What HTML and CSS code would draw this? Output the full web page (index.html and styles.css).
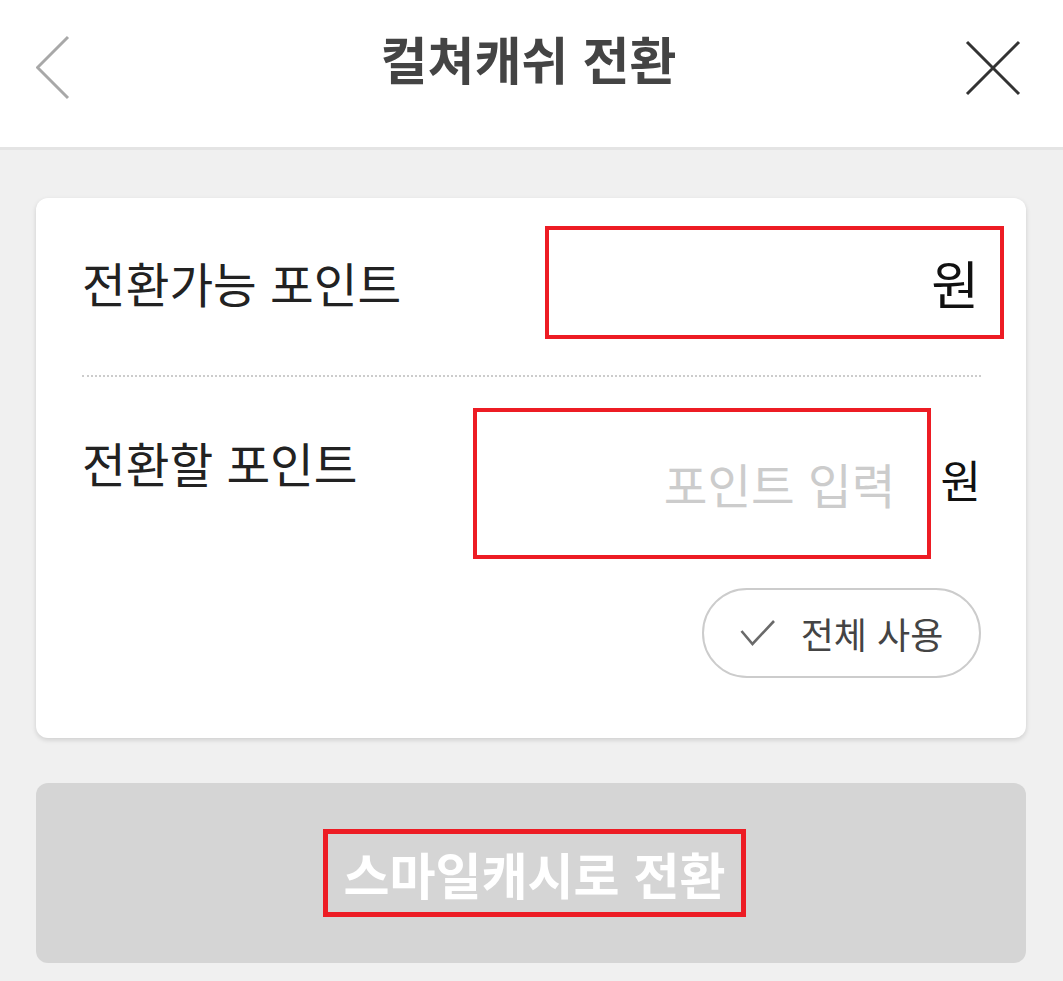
FILE: index.html
```html
<!DOCTYPE html>
<html lang="ko">
<head>
<meta charset="utf-8">
<title>컬쳐캐쉬 전환</title>
<link rel="stylesheet" href="styles.css">
</head>
<body>
<header class="topbar">
  <button class="icon-btn back" aria-label="뒤로">
    <svg width="34" height="66" viewBox="0 0 34 66"><path d="M32 2 L1.5 32.5 L32 63" fill="none" stroke="#a8a8a8" stroke-width="3"/></svg>
  </button>
  <h1 class="title">컬쳐캐쉬 전환</h1>
  <button class="icon-btn close" aria-label="닫기">
    <svg width="56" height="56" viewBox="0 0 56 56"><path d="M2 2 L54 54 M54 2 L2 54" fill="none" stroke="#333" stroke-width="3"/></svg>
  </button>
</header>
<main class="content">
  <section class="card">
    <div class="row row-available">
      <span class="label">전환가능 포인트</span>
      <div class="value-box"><span class="unit unit-big">원</span></div>
    </div>
    <div class="divider"></div>
    <div class="row row-convert">
      <span class="label label-top">전환할 포인트</span>
      <div class="input-box"><input class="point-input" type="text" placeholder="포인트 입력"></div>
      <span class="unit unit-side">원</span>
    </div>
    <div class="row row-all">
      <button class="pill">
        <svg width="36" height="28" viewBox="0 0 36 28"><path d="M1.5 12 L12.5 25 L34 2" fill="none" stroke="#6a6a6a" stroke-width="2.6"/></svg>
        <span>전체 사용</span>
      </button>
    </div>
  </section>
  <button class="submit"><span class="submit-label">스마일캐시로 전환</span></button>
</main>
</body>
</html>
```

FILE: styles.css
```css
* { box-sizing: border-box; }
html, body { margin: 0; padding: 0; }
body {
  width: 1063px;
  min-height: 981px;
  background: #f0f0f0;
  font-family: "Noto Sans CJK KR", "Noto Sans", sans-serif;
  color: #222;
}
.topbar {
  height: 150px;
  background: #fff;
  border-bottom: 3px solid #e4e4e4;
  display: grid;
  grid-template-columns: 1fr auto 1fr;
  align-items: center;
  padding: 0 42px 12px 36px;
}
.icon-btn {
  background: none;
  border: 0;
  padding: 0;
  display: flex;
}
.back { justify-self: start; }
.close { justify-self: end; }
.title {
  margin: 0 0 20px;
  font-size: 51px;
  font-weight: 700;
  color: #444;
  line-height: 62px;
}
.content { padding: 0 37px 18px 36px; }
.card {
  margin-top: 48px;
  background: #fff;
  border-radius: 12px;
  box-shadow: 0 2px 5px rgba(0,0,0,0.14);
  padding: 28px 45px 60px 46px;
}
.row { display: flex; }
.row-available { align-items: center; justify-content: space-between; }
.label { font-size: 47.5px; line-height: 62px; color: #222; }
.value-box {
  flex-shrink: 0;
  width: 459px;
  height: 113px;
  margin-right: -23px;
  border: 4px solid #ed1c24;
  display: flex;
  align-items: center;
  justify-content: flex-end;
  padding-right: 21px;
}
.unit { font-size: 47.5px; line-height: 62px; color: #111; }
.unit-big { font-size: 52px; }
.divider {
  margin-top: 36px;
  border-top: 2px dotted #cccccc;
}
.row-convert { margin-top: 31px; align-items: flex-start; }
.label-top { flex: 1; padding-top: 24px; }
.input-box {
  flex-shrink: 0;
  width: 458px;
  height: 151px;
  border: 4px solid #ed1c24;
  display: flex;
  align-items: center;
}
.point-input {
  width: 100%;
  border: 0;
  outline: 0;
  background: transparent;
  text-align: right;
  padding: 0 31px 0 0;
  font-family: inherit;
  font-size: 47.5px;
  color: #222;
}
.point-input::placeholder { color: #cccccc; }
.unit-side { flex-shrink: 0; margin-left: 10px; align-self: center; margin-top: -10px; font-size: 44px; }
.row-all { margin-top: 29px; justify-content: flex-end; }
.pill {
  width: 279px;
  height: 90px;
  border: 2px solid #cccccc;
  border-radius: 45px;
  background: #fff;
  display: flex;
  align-items: center;
  justify-content: center;
  gap: 25px;
  font-family: inherit;
  font-size: 36px;
  color: #444;
  padding: 0;
}
.submit {
  margin-top: 45px;
  width: 100%;
  height: 180px;
  border: 0;
  border-radius: 12px;
  background: #d5d5d5;
  display: flex;
  align-items: center;
  justify-content: center;
  padding: 0;
  font-family: inherit;
}
.submit-label {
  width: 423px;
  height: 88px;
  margin-left: 7px;
  border: 5px solid #ed1c24;
  display: flex;
  align-items: center;
  justify-content: center;
  font-size: 50px;
  font-weight: 700;
  color: #fff;
}
```
